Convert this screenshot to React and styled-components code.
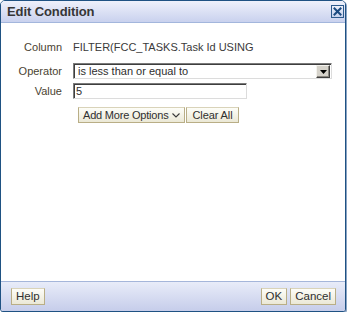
import React from 'react'
import styled, { createGlobalStyle } from 'styled-components'

// Styles
const GlobalStyle = createGlobalStyle`
  html, body {
    margin: 0;
    padding: 0;
    background: #fff;
  }
  body {
    font-family: "Liberation Sans", Arial, sans-serif;
  }
`

const Dialog = styled.div`
  box-sizing: border-box;
  width: 346px;
  height: 312px;
  display: flex;
  flex-direction: column;
  border: 1px solid #1f5283;
  border-radius: 5px 5px 3px 3px;
  overflow: hidden;
  background: #fff;
  box-shadow: 1px 1px 0 #8aa3c4;
`

const TitleBar = styled.div`
  height: 21px;
  flex: none;
  display: flex;
  align-items: center;
  justify-content: space-between;
  padding: 0 1px 0 6px;
  background: linear-gradient(#eef1fb, #c9d1ee);
  border-bottom: 1px solid #a3b6dc;
`

const Title = styled.div`
  font-size: 13px;
  font-weight: bold;
  color: #363636;
  letter-spacing: -0.1px;
`

const CloseButton = styled.div`
  width: 13px;
  height: 13px;
  margin-top: 0;
  display: flex;
  align-items: center;
  justify-content: center;
`

const Body = styled.div`
  flex: 1;
  padding-top: 17px;
  display: grid;
  grid-template-columns: 61px 1fr;
  column-gap: 11px;
  align-content: start;
  font-size: 11px;
`

const Label = styled.div`
  grid-column: 1;
  text-align: right;
  color: #4a4332;
  display: flex;
  align-items: center;
  justify-content: flex-end;
  margin-top: ${(props) => props.$top || 0}px;
  height: ${(props) => props.$h}px;
`

const Cell = styled.div`
  grid-column: 2;
  display: flex;
  align-items: center;
  margin-top: ${(props) => props.$top || 0}px;
  height: ${(props) => props.$h}px;
  color: #3a3a3a;
`

const Select = styled.div`
  box-sizing: border-box;
  width: 259px;
  height: 16px;
  display: flex;
  align-items: center;
  justify-content: space-between;
  border-top: 1px solid #7b7b7b;
  border-left: 1px solid #7b7b7b;
  border-right: 1px solid #dcdcdc;
  border-bottom: 1px solid #dcdcdc;
  box-shadow: inset 1px 1px 0 #3e3e3e;
  padding-left: 4px;
  color: #2e2e2e;
  background: #fff;
`

const DropButton = styled.div`
  box-sizing: border-box;
  width: 14px;
  height: 13px;
  margin-right: 1px;
  margin-top: 1px;
  background: #d6d3cb;
  border-top: 1px solid #f4f3ee;
  border-left: 1px solid #f4f3ee;
  border-right: 1px solid #404040;
  border-bottom: 1px solid #404040;
  box-shadow: inset -1px -1px 0 #8a8780;
  display: flex;
  align-items: center;
  justify-content: center;
`

const Input = styled.div`
  box-sizing: border-box;
  width: 174px;
  height: 16px;
  display: flex;
  align-items: center;
  border-top: 1px solid #7b7b7b;
  border-left: 1px solid #7b7b7b;
  border-right: 1px solid #dcdcdc;
  border-bottom: 1px solid #dcdcdc;
  box-shadow: inset 1px 1px 0 #3e3e3e;
  padding-left: 2px;
  color: #2e2e2e;
`

const ButtonGroup = styled.div`
  display: flex;
  gap: ${(props) => props.$gap || 0}px;
  margin-left: ${(props) => props.$indent || 0}px;
`

const Button = styled.div`
  box-sizing: border-box;
  height: ${(props) => props.$h || 17}px;
  padding: 0 ${(props) => props.$pad || 5}px;
  display: flex;
  align-items: center;
  gap: 4px;
  font-size: ${(props) => props.$size || 11.5}px;
  letter-spacing: ${(props) => props.$track || 0}px;
  color: #2f2f2f;
  background: linear-gradient(#fdfdf8, #ebe8d6);
  border: 1px solid #b9ae86;
  border-top-color: #d9d3b9;
  white-space: nowrap;
`

const Footer = styled.div`
  height: 28px;
  flex: none;
  display: flex;
  align-items: center;
  justify-content: space-between;
  padding: 0 9px 1px 10px;
  background: linear-gradient(#e8ecf9, #c6cdea);
  border-top: 1px solid #a5b6da;
`

const CloseIcon = () => (
  <svg width="13" height="13" viewBox="0 0 13 13">
    <defs>
      <linearGradient id="cg" x1="0" y1="0" x2="0" y2="1">
        <stop offset="0" stopColor="#eef2fb" />
        <stop offset="1" stopColor="#c4d0ec" />
      </linearGradient>
    </defs>
    <rect x="0.5" y="0.5" width="12" height="12" fill="url(#cg)" stroke="#2d5a8c" />
    <path d="M3.5 3.5 L9.5 9.5 M9.5 3.5 L3.5 9.5" stroke="#1b4a80" strokeWidth="2" strokeLinecap="square" />
  </svg>
)

const Chevron = () => (
  <svg width="8" height="5" viewBox="0 0 8 5">
    <path d="M0.5 0.5 L4 4 L7.5 0.5" fill="none" stroke="#3a3a3a" strokeWidth="1.1" />
  </svg>
)

const Triangle = () => (
  <svg width="7" height="4" viewBox="0 0 7 4">
    <path d="M0 0 H7 L3.5 4 Z" fill="#000" />
  </svg>
)

const App = () => {
  return (
    <>
      <GlobalStyle />
      <Dialog>
        <TitleBar>
          <Title>Edit Condition</Title>
          <CloseButton><CloseIcon /></CloseButton>
        </TitleBar>
        <Body>
          <Label $h={13}>Column</Label>
          <Cell $h={13}>FILTER(FCC_TASKS.Task Id USING</Cell>

          <Label $h={16} $top={10}>Operator</Label>
          <Cell $h={16} $top={10}>
            <Select>
              <span>is less than or equal to</span>
              <DropButton><Triangle /></DropButton>
            </Select>
          </Cell>

          <Label $h={16} $top={4}>Value</Label>
          <Cell $h={16} $top={4}>
            <Input>5</Input>
          </Cell>

          <Cell $h={16} $top={8}>
            <ButtonGroup $indent={5} $gap={1}>
              <Button $h={16} $pad={4} $size={11} $track={-0.2}>Add More Options <Chevron /></Button>
              <Button $h={16} $pad={5} $size={11} $track={-0.1}>Clear All</Button>
            </ButtonGroup>
          </Cell>
        </Body>
        <Footer>
          <Button $pad={4}>Help</Button>
          <ButtonGroup $gap={3}>
            <Button $pad={4}>OK</Button>
            <Button $pad={4}>Cancel</Button>
          </ButtonGroup>
        </Footer>
      </Dialog>
    </>
  )
}

export default App
